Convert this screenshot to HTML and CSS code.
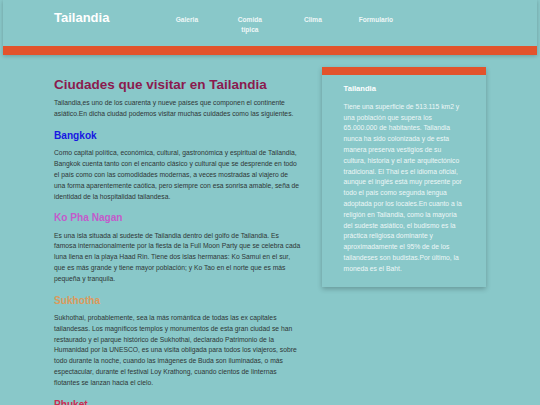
FILE: index.html
```html
<!DOCTYPE html>
<html lang="es">
<head>
<meta charset="utf-8">
<title>Tailandia</title>
<link rel="stylesheet" href="styles.css">
</head>
<body>
<header class="header">
  <div class="brand">Tailandia</div>
  <nav class="nav">
    <a class="nav-item" href="#">Galeria</a>
    <a class="nav-item" href="#">Comida típica</a>
    <a class="nav-item" href="#">Clima</a>
    <a class="nav-item" href="#">Formulario</a>
  </nav>
</header>
<div class="container">
  <main class="main">
    <h1 class="title">Ciudades que visitar en Tailandia</h1>
    <p>Tailandia,es uno de los cuarenta y nueve países que componen el continente asiático.En dicha ciudad podemos visitar muchas cuidades como las siguientes.</p>
    <h2 class="city city-bangkok">Bangkok</h2>
    <p>Como capital política, económica, cultural, gastronómica y espiritual de Tailandia, Bangkok cuenta tanto con el encanto clásico y cultural que se desprende en todo el país como con las comodidades modernas, a veces mostradas al viajero de una forma aparentemente caótica, pero siempre con esa sonrisa amable, seña de identidad de la hospitalidad tailandesa.</p>
    <h2 class="city city-ko">Ko Pha Nagan</h2>
    <p>Es una isla situada al sudeste de Tailandia dentro del golfo de Tailandia. Es famosa internacionalmente por la fiesta de la Full Moon Party que se celebra cada luna llena en la playa Haad Rin. Tiene dos islas hermanas: Ko Samui en el sur, que es más grande y tiene mayor población; y Ko Tao en el norte que es más pequeña y tranquila.</p>
    <h2 class="city city-sukhotha">Sukhotha</h2>
    <p>Sukhothai, probablemente, sea la más romántica de todas las ex capitales tailandesas. Los magníficos templos y monumentos de esta gran ciudad se han restaurado y el parque histórico de Sukhothai, declarado Patrimonio de la Humanidad por la UNESCO, es una visita obligada para todos los viajeros, sobre todo durante la noche, cuando las imágenes de Buda son iluminadas, o más espectacular, durante el festival Loy Krathong, cuando cientos de linternas flotantes se lanzan hacia el cielo.</p>
    <h2 class="city city-phuket">Phuket</h2>
  </main>
  <aside class="sidebar">
    <h3 class="sidebar-title">Tailandia</h3>
    <p class="sidebar-text">Tiene una superficie de 513.115 km2 y una población que supera los 65.000.000 de habitantes. Tailandia nunca ha sido colonizada y de esta manera preserva vestigios de su cultura, historia y el arte arquitectónico tradicional. El Thai es el idioma oficial, aunque el inglés está muy presente por todo el país como segunda lengua adoptada por los locales.En cuanto a la religión en Tailandia, como la mayoría del sudeste asiático, el budismo es la práctica religiosa dominante y aproximadamente el 95% de de los tailandeses son budistas.Por último, la moneda es el Baht.</p>
  </aside>
</div>
</body>
</html>
```

FILE: styles.css
```css
* {
  box-sizing: border-box;
}

html, body {
  margin: 0;
  padding: 0;
}

body {
  background: #89c8c9;
  font-family: "Liberation Sans", Arial, sans-serif;
  font-size: 6.75px;
  line-height: 10.8px;
  color: #2f3636;
  height: 405px;
  overflow: hidden;
}

.header {
  display: flex;
  align-items: flex-start;
  height: 55px;
  margin: 0 3px;
  padding: 10.4px 0 0 51px;
  border-bottom: 9px solid #e2532c;
  box-shadow: 0 1px 4px rgba(0, 0, 0, 0.22);
}

.brand {
  font-size: 13px;
  font-weight: bold;
  line-height: 15px;
  color: #ffffff;
}

.nav {
  display: flex;
  margin-left: 46px;
  margin-top: 4.2px;
}

.nav-item {
  width: 63px;
  padding: 0 12px;
  text-align: center;
  font-size: 6.6px;
  font-weight: bold;
  line-height: 10.5px;
  color: #eef7f7;
  text-decoration: none;
}

.container {
  display: flex;
  align-items: flex-start;
  gap: 21px;
  width: 432px;
  margin: 12.3px 0 0 54px;
}

.main {
  width: 247px;
  flex: none;
}

.main p {
  margin: 6.75px 0;
}

.title {
  margin: 9.3px 0 6.7px;
  font-size: 13.5px;
  line-height: normal;
  font-weight: bold;
  color: #8b1a4e;
}

.city {
  margin: 10.2px 0 7.2px;
  font-size: 10.125px;
  line-height: normal;
  font-weight: bold;
}

.city-bangkok { color: #1717e2; }
.city-ko { color: #c35bcb; }
.city-sukhotha { color: #dc9a5c; }
.city-phuket { color: #cc2d52; }

.sidebar {
  width: 164px;
  flex: none;
  padding: 9px 21.6px 6px;
  border-top: 8.4px solid #e2532c;
  box-shadow: 0 2px 5px rgba(0, 0, 0, 0.24);
}

.sidebar-title {
  margin: 0 0 8.5px;
  font-size: 7.6px;
  line-height: normal;
  font-weight: bold;
  color: #ffffff;
}

.sidebar-text {
  margin: 0 0 6.75px;
  color: #eef7f7;
}
```
